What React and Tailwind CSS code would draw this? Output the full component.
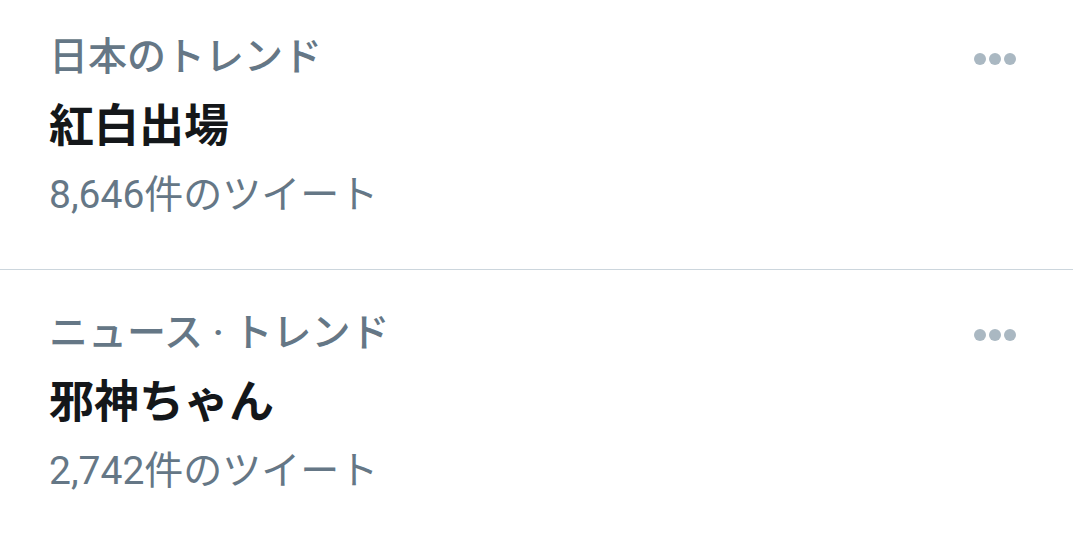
const trends = [
  { category: '日本のトレンド', title: '紅白出場', count: '8,646件のツイート', pt: 'pt-[32px]' },
  { category: 'ニュース · トレンド', title: '邪神ちゃん', count: '2,742件のツイート', pt: 'pt-[38px]' },
];

function MoreDots() {
  return (
    <div className="flex items-center gap-[3px] mt-[3px]">
      <span className="block w-[12px] h-[12px] rounded-full bg-[#aab8c2]" />
      <span className="block w-[12px] h-[12px] rounded-full bg-[#aab8c2]" />
      <span className="block w-[12px] h-[12px] rounded-full bg-[#aab8c2]" />
    </div>
  );
}

export default function App() {
  return (
    <div
      className="w-[1073px] h-[533px] bg-white overflow-hidden"
      style={{ fontFamily: 'Roboto, "Noto Sans CJK JP", sans-serif' }}
    >
      {trends.map((t, i) => (
        <div
          key={i}
          className={`flex justify-between pl-[49px] pr-[57px] pb-[49px] ${t.pt} ${i === 0 ? 'border-b border-[#ccd6dd]' : ''}`}
        >
          <div className="flex flex-col">
            <div className="h-[50px] leading-[50px] text-[39px] font-medium text-[#657786] whitespace-pre">{t.category}</div>
            <div className="mt-[15px] h-[60px] leading-[60px] text-[45px] font-bold text-[#14171a]">{t.title}</div>
            <div className="mt-[13px] h-[50px] leading-[50px] text-[39px] text-[#657786]">{t.count}</div>
          </div>
          <div className="h-[50px] flex items-center">
            <MoreDots />
          </div>
        </div>
      ))}
    </div>
  );
}
